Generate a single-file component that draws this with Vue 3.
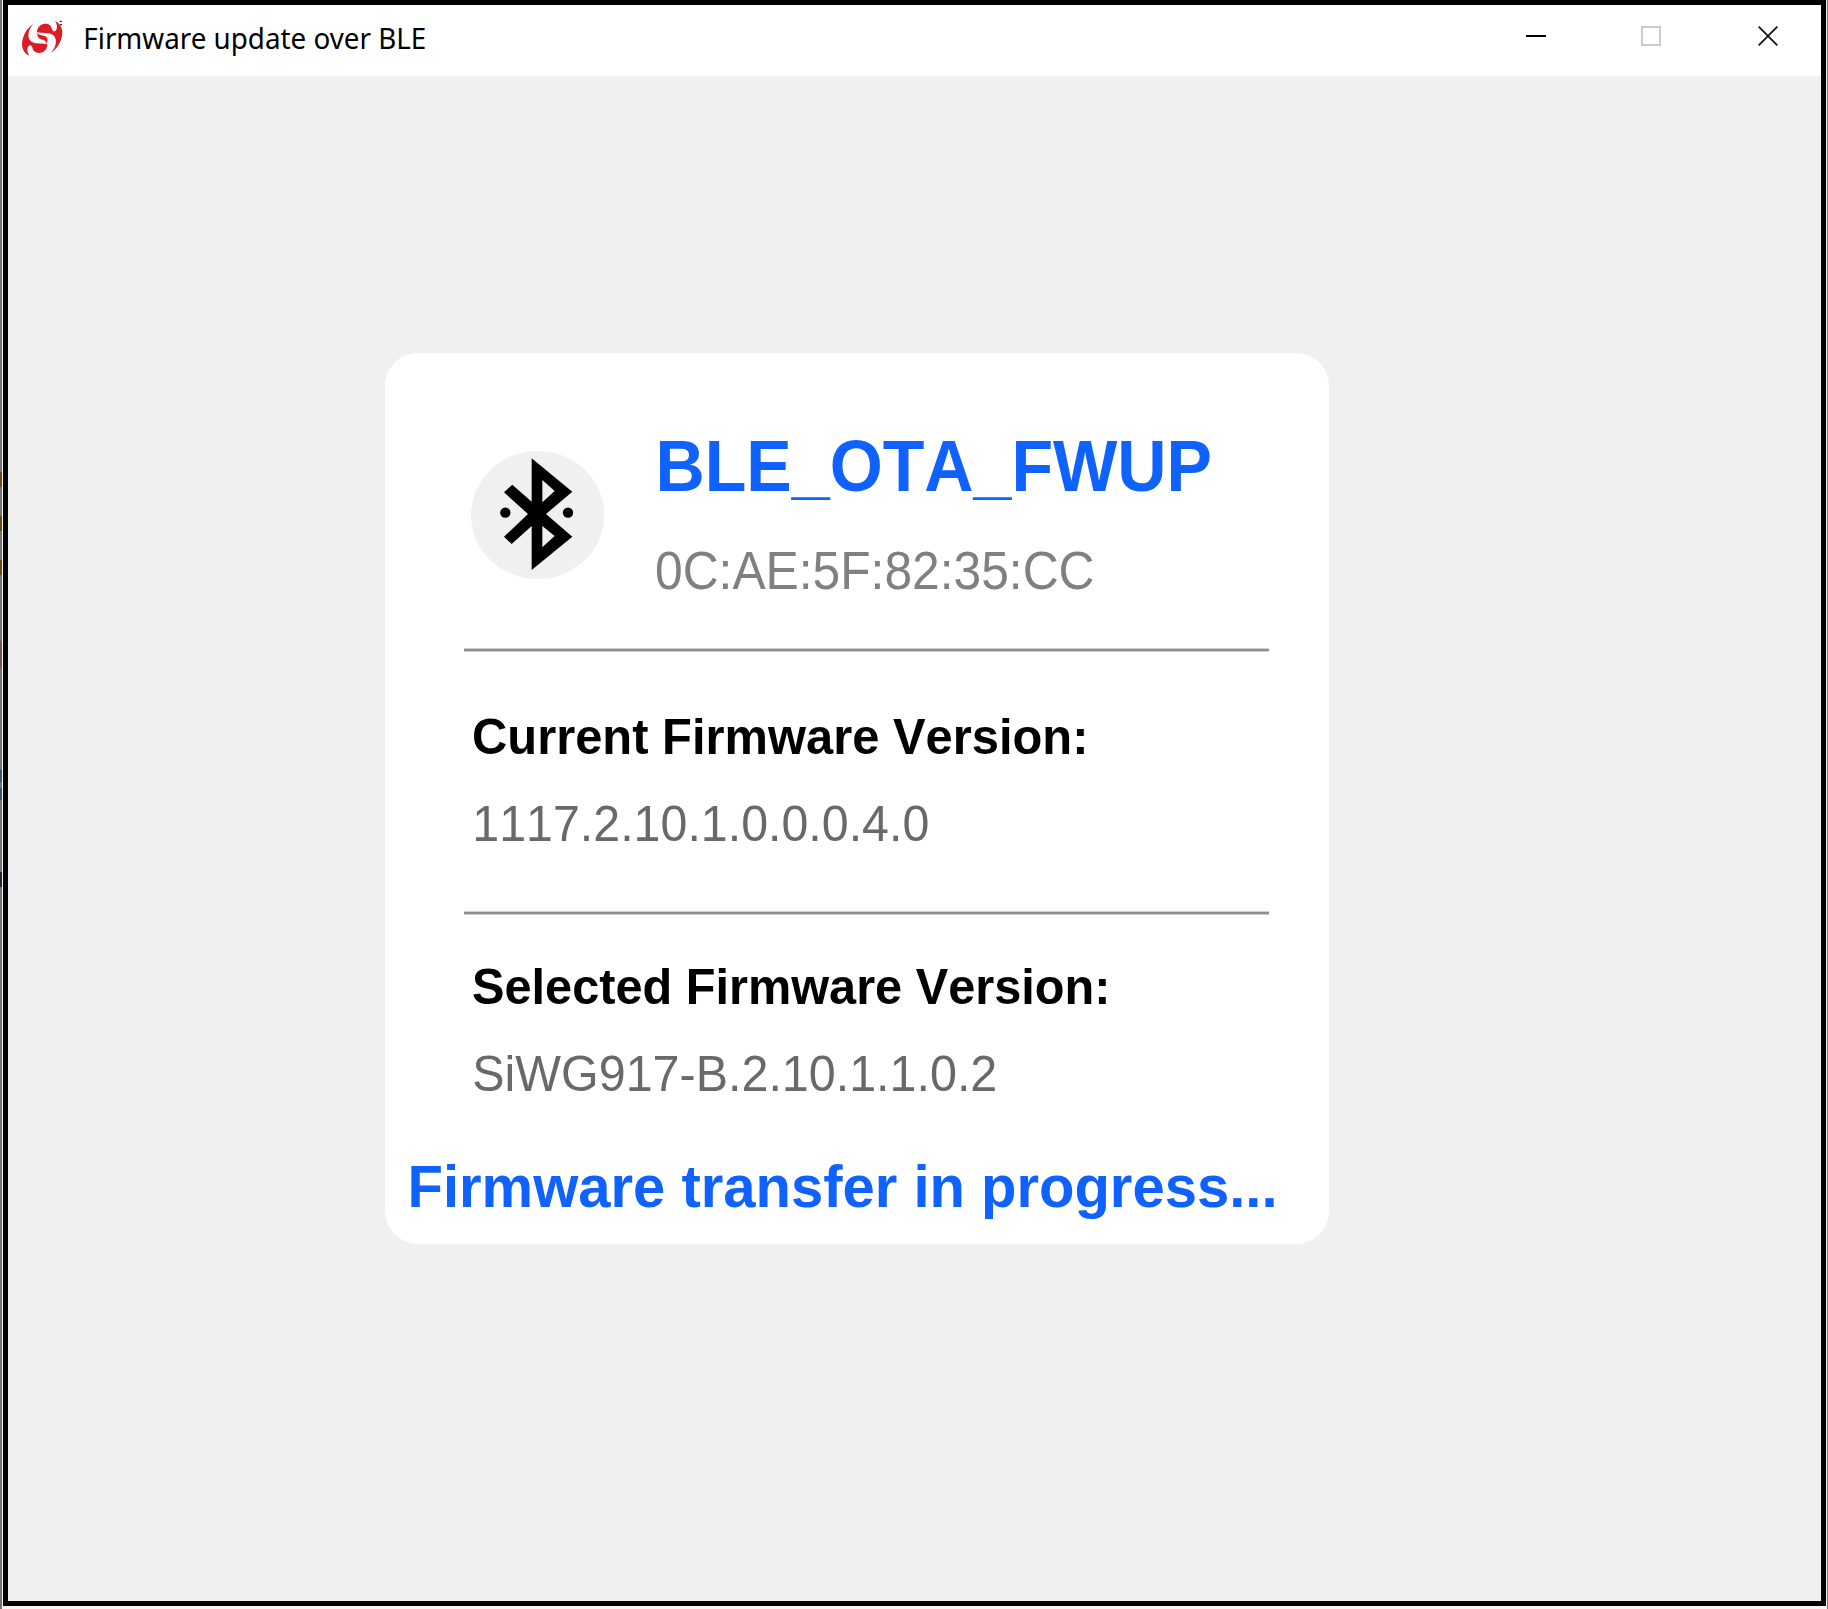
<script setup>
const device = { name: 'BLE_OTA_FWUP', address: '0C:AE:5F:82:35:CC' }
const versions = [
  { id: 'current', label: 'Current Firmware Version:', labelWidth: 616.5, value: '1117.2.10.1.0.0.0.4.0', valueWidth: 457 },
  { id: 'selected', label: 'Selected Firmware Version:', labelWidth: 638.5, value: 'SiWG917-B.2.10.1.1.0.2', valueWidth: 525 },
]
</script>

<template>
  <div class="desktop">
    <div class="behind"></div>
    <div class="window">
      <header class="titlebar">
        <svg class="logo" viewBox="63 60 126 111" width="42" height="37">
          <defs>
            <path id="swirl" d="M100 72C82 82 66 108 66 134C67 150 75 161 88 167C81 156 80 145 86 138C90 134 94 136 97 142C98 154 108 160 120 159C134 157 142 146 142 133C130 129 105 134 93 124C80 112 84 88 100 72Z" />
          </defs>
          <g fill="#da1e28">
            <use href="#swirl" />
            <use href="#swirl" transform="rotate(180 126.5 115)" />
            <path d="M112 98C116 106 126 104 136 109C145 114 145 126 137 132C138 125 137 121 128 119C118 117 111 112 112 98Z" />
          </g>
          <path d="M180 64h6M180 74h6" stroke="#000" stroke-width="3" />
        </svg>
        <svg class="caption" width="360" height="54">
          <text x="1.300" y="34" textLength="343" lengthAdjust="spacingAndGlyphs">Firmware update over BLE</text>
        </svg>
        <div class="controls">
          <svg width="20" height="20"><path d="M0 10H20" stroke="#000" stroke-width="2" /></svg>
          <svg width="20" height="20"><rect x="1" y="1" width="18" height="18" fill="none" stroke="#ccc" stroke-width="2" /></svg>
          <svg width="20" height="20"><path d="M.7 .7L19.3 19.3M19.3 .7L.7 19.3" stroke="#111" stroke-width="1.7" /></svg>
        </div>
      </header>
      <main class="content">
        <section class="card">
          <div class="device">
            <svg class="bluetooth" viewBox="60 60 408 390" width="136" height="130">
              <ellipse cx="263" cy="255" rx="200" ry="192" fill="#f0f0f0" />
              <path fill-rule="evenodd" d="M245 85L367 185L288 252L367 320L245 420V288L185 342L162 320L234 252L162 187L187 164L245 215ZM277 150V217L314 183ZM277 288V352L314 318Z" />
              <circle cx="166" cy="248" r="15.500" />
              <circle cx="354" cy="248" r="15.500" />
            </svg>
            <svg class="identity" width="600" height="190">
              <text class="name" x="5.500" y="71.300" textLength="556.500" lengthAdjust="spacingAndGlyphs">{{ device.name }}</text>
              <text class="address" x="5" y="168.800" textLength="439.500" lengthAdjust="spacingAndGlyphs">{{ device.address }}</text>
            </svg>
          </div>
          <div v-for="item in versions" :key="item.id" class="version" :class="item.id">
            <div class="rule"></div>
            <svg class="lines" width="700" height="160">
              <text class="label" x="2" y="51.500" :textLength="item.labelWidth" lengthAdjust="spacingAndGlyphs">{{ item.label }}</text>
              <text class="value" x="2.300" y="139.300" :textLength="item.valueWidth" lengthAdjust="spacingAndGlyphs">{{ item.value }}</text>
            </svg>
          </div>
          <svg class="status" width="900" height="92">
            <text x="2.500" y="59.700" textLength="870" lengthAdjust="spacingAndGlyphs">Firmware transfer in progress...</text>
          </svg>
        </section>
      </main>
    </div>
  </div>
</template>

<style>
body { margin: 0; overflow: hidden; }
</style>

<style scoped>
svg { display: block; flex: none; font-kerning: none; }
.desktop {
  display: flex;
  box-sizing: border-box;
  width: 1828px;
  height: 1609px;
  padding-bottom: 3px;
  background: #f7f3f5;
  border-right: 1px solid #777;
}
/* sliver of the window lying underneath */
.behind {
  width: 2px;
  height: 1609px;
  margin-right: 1px;
  background: linear-gradient(
    #727272 472px, #6b4819 472px 487px, #727272 487px 516px, #6b4819 516px 531px,
    #727272 531px 560px, #6b4819 560px 575px, #727272 575px 641px, #70584a 641px 668px,
    #727272 668px 770px, #35566b 770px 782px, #727272 782px 788px, #35566b 788px 800px,
    #727272 800px 872px, #222733 872px 887px, #727272 887px);
}
.window {
  display: flex;
  flex-direction: column;
  box-sizing: border-box;
  width: 1823px;
  height: 1606px;
  border: 5px solid #000;
  background: #f0f0f0;
}
.titlebar {
  display: flex;
  box-sizing: border-box;
  height: 72px;
  padding: 10px 43px 0 13px;
  background: #fff;
  border-bottom: 1px solid #f4f4f4;
}
.logo { margin-top: 5px; }
.caption { margin-left: 19px; font: 29px "Noto Sans", "Open Sans", sans-serif; }
.controls { display: flex; gap: 95px; margin: 11px 0 0 auto; }
.controls svg:last-child { margin-left: 2px; }
.content { flex: 1; padding: 276px 0 0 377px; }
.card {
  box-sizing: border-box;
  width: 944px;
  height: 891px;
  padding-left: 22px;
  border-radius: 33px;
  background: #fff;
  font-family: "Liberation Sans", Arial, sans-serif;
}
.device { display: flex; height: 295px; padding-left: 63px; }
.bluetooth { margin-top: 97px; }
.identity { margin: 67px 0 0 44px; }
.name { font-size: 72px; font-weight: 700; fill: #0f62fe; }
.address { font-size: 53px; fill: #808080; }
.version { height: 263px; padding-left: 57px; }
.selected { height: 236px; }
.rule {
  width: 805px;
  height: 4px;
  background: linear-gradient(#cfcfcf 1px, #8e8e8e 1px 3px, #cfcfcf 3px);
}
.lines { margin: 50px 0 0 6px; }
.selected .lines { margin-top: 37px; }
.label { font-size: 49.500px; font-weight: 700; }
.value { font-size: 49.500px; fill: #696969; }
.status { margin-left: -2px; }
.status text { font-size: 60px; font-weight: 700; fill: #0f62fe; }
</style>
